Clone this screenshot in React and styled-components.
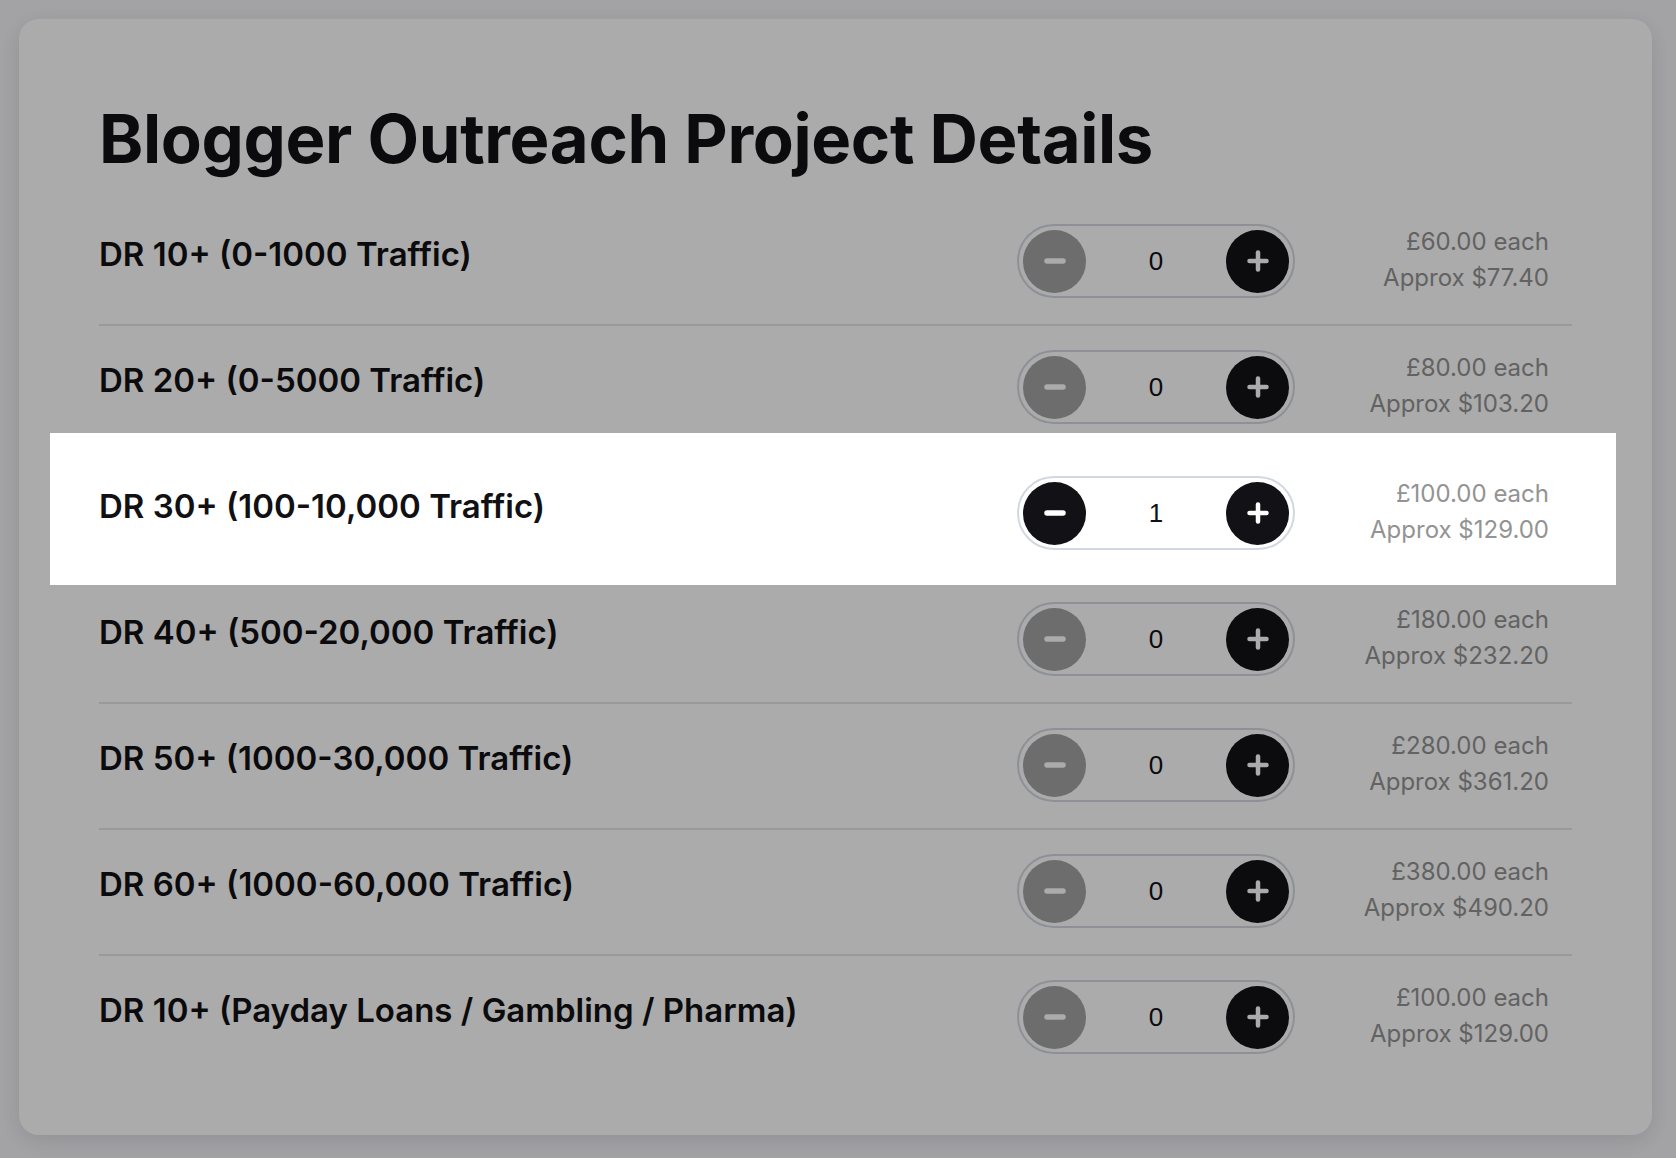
import React, { useState } from "react";
import styled, { createGlobalStyle, css } from "styled-components";

const GlobalStyle = createGlobalStyle`
  html, body {
    margin: 0;
    padding: 0;
    background: #f4f4f8;
    overflow: hidden;
  }
  * {
    box-sizing: border-box;
  }
`;

const PACKAGES = [
  { id: 1, name: "DR 10+ (0-1000 Traffic)", gbp: "60.00", usd: "77.40" },
  { id: 2, name: "DR 20+ (0-5000 Traffic)", gbp: "80.00", usd: "103.20" },
  { id: 3, name: "DR 30+ (100-10,000 Traffic)", gbp: "100.00", usd: "129.00" },
  { id: 4, name: "DR 40+ (500-20,000 Traffic)", gbp: "180.00", usd: "232.20" },
  { id: 5, name: "DR 50+ (1000-30,000 Traffic)", gbp: "280.00", usd: "361.20" },
  { id: 6, name: "DR 60+ (1000-60,000 Traffic)", gbp: "380.00", usd: "490.20" },
  { id: 7, name: "DR 10+ (Payday Loans / Gambling / Pharma)", gbp: "100.00", usd: "129.00" },
];

const MinusIcon = () => (
  <svg width="24" height="24" viewBox="0 0 24 24" fill="none">
    <line x1="4" y1="12" x2="20" y2="12" stroke="currentColor" strokeWidth="5.5" strokeLinecap="round" />
  </svg>
);

const PlusIcon = () => (
  <svg width="24" height="24" viewBox="0 0 24 24" fill="none">
    <line x1="3.5" y1="12" x2="20.5" y2="12" stroke="currentColor" strokeWidth="4.5" strokeLinecap="round" />
    <line x1="12" y1="3.5" x2="12" y2="20.5" stroke="currentColor" strokeWidth="4.5" strokeLinecap="round" />
  </svg>
);

const App = () => {
  const [counts, setCounts] = useState({ 3: 1 });
  const focused = 3;

  const change = (id, delta) =>
    setCounts((c) => ({ ...c, [id]: Math.max(0, (c[id] || 0) + delta) }));

  return (
    <>
      <GlobalStyle />
      <Page>
        <Card>
          <Title>Blogger Outreach Project Details</Title>
          <List>
            {PACKAGES.map((pkg, i) => {
              const qty = counts[pkg.id] || 0;
              return (
                <Row key={pkg.id} first={i === 0} highlighted={pkg.id === focused}>
                  <Label>{pkg.name}</Label>
                  <Stepper>
                    <StepButton disabled={qty === 0} onClick={() => change(pkg.id, -1)}>
                      <MinusIcon />
                    </StepButton>
                    <Qty>{qty}</Qty>
                    <StepButton onClick={() => change(pkg.id, 1)}>
                      <PlusIcon />
                    </StepButton>
                  </Stepper>
                  <Price>
                    <span>£{pkg.gbp} each</span>
                    <span>Approx ${pkg.usd}</span>
                  </Price>
                </Row>
              );
            })}
          </List>
        </Card>
      </Page>
    </>
  );
};

const Page = styled.div`
  padding: 19px 24px 24px 19px;
  font-family: Inter, "Noto Sans", sans-serif;
`;

const Card = styled.div`
  background: #ffffff;
  border-radius: 20px;
  padding: 80px 80px 55px;
  box-shadow: 0 6px 22px rgba(30, 30, 60, 0.12);
`;

const Title = styled.h1`
  margin: 0 0 19px;
  font-size: 67px;
  line-height: 80px;
  font-weight: 700;
  color: #111114;
  letter-spacing: -0.35px;
`;

const List = styled.div`
  display: flex;
  flex-direction: column;
`;

const Row = styled.div`
  display: grid;
  grid-template-columns: 1fr 278px 277px;
  align-items: start;
  padding: 24px 0 26px;
  border-top: 2px solid ${(p) => (p.first ? "transparent" : "#e6e6e8")};

  ${(p) =>
    p.highlighted &&
    css`
      position: relative;
      z-index: 1;

      &::before {
        content: "";
        position: absolute;
        top: -19px;
        bottom: -9px;
        left: -49px;
        right: -44px;
        background: #ffffff;
        z-index: -1;
        box-shadow: 0 0 0 3000px rgba(0, 0, 0, 0.33);
      }
    `}
`;

const Label = styled.div`
  padding-top: 10px;
  font-size: 33px;
  line-height: 40px;
  font-weight: 600;
  color: #111114;
`;

const Stepper = styled.div`
  display: flex;
  align-items: center;
  justify-content: space-between;
  height: 74px;
  padding: 0 4px;
  border: 2px solid #d2d8e2;
  border-radius: 37px;
  background: transparent;
`;

const StepButton = styled.button`
  display: flex;
  align-items: center;
  justify-content: center;
  width: 63px;
  height: 63px;
  padding: 0;
  border: none;
  border-radius: 50%;
  background: ${(p) => (p.disabled ? "#a3a3a3" : "#121216")};
  color: #ffffff;
  cursor: ${(p) => (p.disabled ? "default" : "pointer")};
`;

const Qty = styled.span`
  font-family: "Liberation Sans", Arial, sans-serif;
  font-size: 26px;
  color: #111114;
`;

const Price = styled.div`
  display: flex;
  flex-direction: column;
  align-items: flex-end;
  padding-right: 23px;
  font-size: 24px;
  line-height: 36px;
  color: #939393;
`;

export default App;
